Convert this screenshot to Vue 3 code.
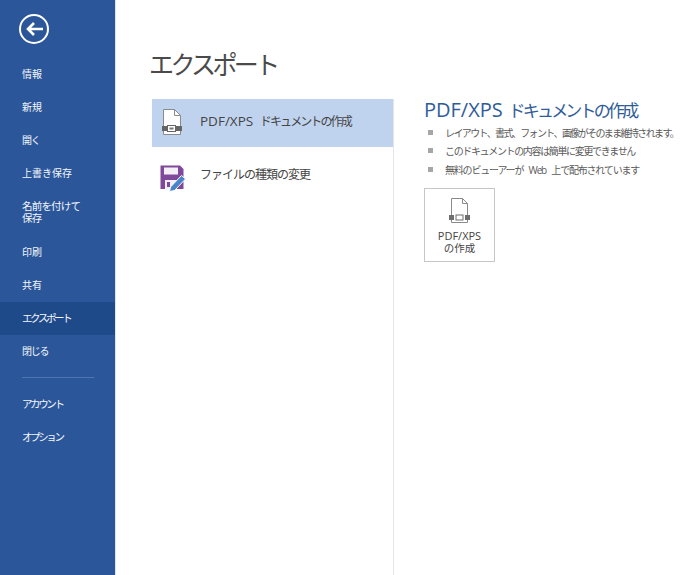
<script setup>
const top = [
  { label: '情報' },
  { label: '新規' },
  { label: '開く', cls: 'tight' },
  { label: '上書き保存' },
  { label: '名前を付けて\n保存', cls: 'two' },
  { label: '印刷' },
  { label: '共有' },
  { label: 'エクスポート', cls: 'kana active' },
  { label: '閉じる', cls: 'tight' },
]
const bottom = ['アカウント', 'オプション']
const bullets = [
  { text: 'レイアウト、書式、フォント、画像がそのまま維持されます。', cls: 'b1' },
  { text: 'このドキュメントの内容は簡単に変更できません', cls: 'b2' },
  { text: '無料のビューアーが Web 上で配布されています', cls: 'b3' },
]
</script>

<template>
  <div class="app">
    <aside class="side">
      <div class="back">
        <svg width="32" height="32" viewBox="0 0 32 32">
          <circle cx="16" cy="16" r="14" fill="none" stroke="#fff" stroke-width="2" />
          <path d="M10 16H25M16 10L10 16L16 22" fill="none" stroke="#fff" stroke-width="2.6" />
        </svg>
      </div>
      <nav class="nav">
        <div v-for="t in top" :key="t.label" class="item" :class="t.cls">{{ t.label }}</div>
      </nav>
      <div class="rule"></div>
      <nav class="nav">
        <div v-for="t in bottom" :key="t" class="item kana">{{ t }}</div>
      </nav>
    </aside>
    <main class="main">
      <h1 class="title">エクスポート</h1>
      <div class="cols">
        <div class="list">
          <div class="row sel">
            <svg class="ic" width="22" height="27" viewBox="0 0 22 27">
              <path d="M2.5 0.5H13.5L19.5 6.5V25.5H2.5Z" fill="#fff" stroke="#8a8a8a" />
              <path d="M13.5 0.5V6.5H19.5" fill="none" stroke="#8a8a8a" />
              <rect x="1" y="17" width="20" height="5" fill="#666" />
              <rect x="6.5" y="16.5" width="8" height="6" fill="#fff" stroke="#666" />
              <rect x="8.5" y="18.5" width="4" height="2" fill="#777" />
            </svg>
            <span class="rowtext"><span class="lat">PDF/XPS</span> <span class="kn">ドキュメントの作成</span></span>
          </div>
          <div class="row low">
            <svg class="ic2" width="27" height="28" viewBox="0 0 27 28">
              <path d="M0.5 1.5H20L23.5 5V25H0.5Z" fill="#80489a" />
              <rect x="4" y="3.5" width="14" height="7" fill="#f4eef7" />
              <rect x="5" y="16" width="12" height="9" fill="#f4eef7" />
              <rect x="7" y="18" width="3" height="5" fill="#80489a" />
              <path d="M10.5 23L21.5 11.5L25.5 15L14.5 26.5L9.5 27.5Z" fill="#4a84c8" stroke="#fff" />
            </svg>
            <span class="rowtext2">ファイルの種類の変更</span>
          </div>
        </div>
        <section class="detail">
          <h2 class="dh"><span class="dlat">PDF/XPS</span> <span class="dkn">ドキュメントの作成</span></h2>
          <ul class="ul">
            <li v-for="b in bullets" :key="b.text" class="li" :class="b.cls"><i class="sq"></i>{{ b.text }}</li>
          </ul>
          <div class="btn">
            <svg class="btnic" width="22" height="26" viewBox="0 0 22 26">
              <path d="M2.5 0.5H13.5L18.5 5.5V24.5H2.5Z" fill="#fff" stroke="#8a8a8a" />
              <path d="M13.5 0.5V5.5H18.5" fill="none" stroke="#8a8a8a" />
              <rect x="0" y="17" width="5" height="5" fill="#6f6f6f" />
              <rect x="16" y="17" width="5" height="5" fill="#6f6f6f" />
              <rect x="7" y="17" width="7" height="5" fill="#fff" stroke="#6f6f6f" />
            </svg>
            <span class="btntext"><span class="blat">PDF/XPS</span><br />の作成</span>
          </div>
        </section>
      </div>
    </main>
  </div>
</template>

<style>
html, body { margin: 0; background: #fff; }
</style>

<style scoped>
.app {
  display: flex;
  width: 700px;
  height: 575px;
  overflow: hidden;
  background: #fff;
  font-family: "Noto Sans CJK JP", "Liberation Sans", sans-serif;
  color: #444;
}
.side {
  width: 116px;
  flex: none;
  background: #2b579a;
  color: #f4f6fa;
  padding-top: 13px;
  box-sizing: border-box;
  border-right: 1px solid #dfe5ee;
}
.back { padding-left: 18px; height: 45px; }
.nav { display: flex; flex-direction: column; }
.item {
  display: flex;
  align-items: center;
  height: 33px;
  box-sizing: border-box;
  padding: 0 0 2px 22px;
  font-size: 10px;
  line-height: 12px;
  white-space: pre-line;
}
.item.two { height: 46px; letter-spacing: -0.8px; font-size: 10.5px; }
.item.tight { letter-spacing: -1.3px; }
.item.kana { font-size: 10.5px; letter-spacing: -2.4px; }
.item.active { background: #1f4a8a; }
.rule { height: 1px; width: 72px; margin: 9px 0 10px 22px; background: #4f76b0; }
.main { flex: 1; min-width: 0; padding: 0 0 0 35px; display: flex; flex-direction: column; }
.title { margin: 45px 0 0 -2px; font-size: 25px; line-height: 36px; font-weight: 400; color: #4a4a4a; height: 54px; letter-spacing: -3.6px; }
.cols { display: flex; flex: 1; }
.list { width: 241px; border-right: 1px solid #e6e6e6; flex: none; margin-left: 1px; }
.row { height: 48px; display: flex; align-items: center; font-size: 12px; color: #444; position: relative; box-sizing: border-box; }
.row.sel { background: #c0d3ee; padding-bottom: 4px; padding-left: 48px; }
.row.low { padding-top: 4px; padding-left: 48px; }
.lat { font-family: "Open Sans", sans-serif; font-size: 13.5px; }
.kn { letter-spacing: -1.9px; margin-left: 5px; }
.rowtext { white-space: nowrap; word-spacing: -1px; }
.rowtext2 { letter-spacing: -1px; white-space: nowrap; }
.ic { position: absolute; left: 9px; top: 10px; }
.ic2 { position: absolute; left: 8px; top: 17px; }
.detail { padding-left: 30px; margin-top: -1px; }
.dh { margin: 0; font-size: 17px; line-height: 24px; font-weight: 400; color: #2f5c98; white-space: nowrap; word-spacing: -1px; }
.dlat { font-family: "Open Sans", sans-serif; font-size: 20px; }
.dkn { letter-spacing: -2.8px; margin-left: 3px; }
.ul { list-style: none; margin: 1px 0 0; padding: 0; }
.li { display: flex; align-items: center; height: 18.5px; font-size: 10px; color: #5a5a5a; white-space: pre; }
.b1 { letter-spacing: -1.62px; }
.b2 { letter-spacing: -1.35px; }
.b3 { letter-spacing: -1.2px; word-spacing: 4px; font-family: "Open Sans", "Noto Sans CJK JP", sans-serif; }
.sq { width: 5px; height: 5px; background: #a6a6a6; margin: 0 12px 0 4px; flex: none; }
.btn { margin-top: 9px; width: 69px; border: 1px solid #c6c6c6; display: flex; flex-direction: column; align-items: center; padding-top: 9px; height: 63px; font-size: 10.5px; line-height: 12.5px; text-align: center; color: #444; }
.btnic { display: block; flex: none; margin-left: 1px; }
.btntext { display: block; margin-top: 6px; white-space: nowrap; }
.blat { font-family: "Open Sans", sans-serif; font-size: 11px; }
</style>
